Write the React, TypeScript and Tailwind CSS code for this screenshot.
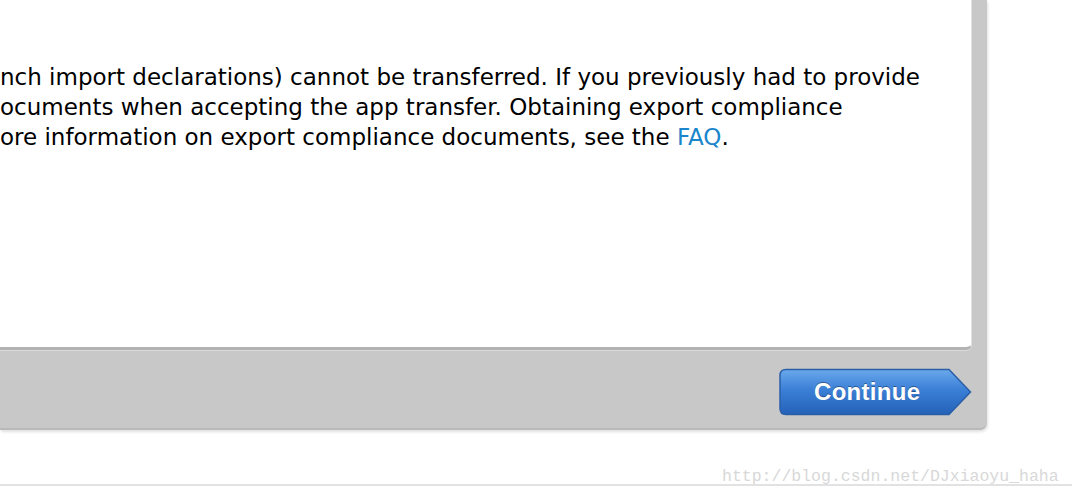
export default function App() {
  return (
    <div className="relative w-[1072px] h-[500px] bg-white overflow-hidden">
      {/* dialog frame */}
      <div className="w-[987px] h-[430px] bg-[#c8c8c8] rounded-br-[7px] border-b-2 border-[#b9b9b9] shadow-[1px_2px_3px_rgba(0,0,0,0.12)] flex flex-col">
        <div className="w-[972px] h-[350px] bg-white rounded-br-[6px] border-b-[3px] border-r border-b-[#b3b3b3] border-r-[#e2e2e2] shadow-[0_1px_0_#dadada]">
          <div className="pt-[62px] text-[23px] leading-[30px] text-black whitespace-nowrap font-['Lucida_Grande','DejaVu_Sans',sans-serif]">
            <p>nch import declarations) cannot be transferred. If you previously had to provide</p>
            <p>ocuments when accepting the app transfer. Obtaining export compliance</p>
            <p>
              ore information on export compliance documents, see the{' '}
              <a className="text-[#1a86cc]">FAQ</a>.
            </p>
          </div>
        </div>
        <div className="flex justify-end pr-[15px] pt-[18px]">
          <ContinueButton />
        </div>
      </div>

      <div className="mt-[54px] h-[2px] w-full bg-[#e2e2e2]" />

      <span className="absolute left-[722px] top-[466px] text-[16.5px] leading-[22px] text-[#d8d8d8] font-['Liberation_Mono',monospace]">
        http://blog.csdn.net/DJxiaoyu_haha
      </span>
    </div>
  );
}

function ContinueButton() {
  return (
    <button className="relative w-[193px] h-[48px] flex items-center pl-[35px]">
      <svg className="absolute inset-0" width="193" height="48" viewBox="0 0 193 48">
        <defs>
          <linearGradient id="btn" x1="0" y1="0" x2="0" y2="1">
            <stop offset="0" stopColor="#6aa9ec" />
            <stop offset="0.45" stopColor="#3b7fd6" />
            <stop offset="1" stopColor="#2462b8" />
          </linearGradient>
        </defs>
        <path
          d="M7 1.5 H170 L191.5 24 L170 46.5 H7 Q1 46.5 1 40.5 V7.5 Q1 1.5 7 1.5 Z"
          fill="url(#btn)"
          stroke="#2a5fa8"
          strokeWidth="1.5"
        />
      </svg>
      <span className="relative text-white font-bold text-[24px] tracking-[0.3px] font-['Liberation_Sans',Arial,sans-serif] [text-shadow:0_-1px_0_rgba(0,0,0,0.35)]">
        Continue
      </span>
    </button>
  );
}
